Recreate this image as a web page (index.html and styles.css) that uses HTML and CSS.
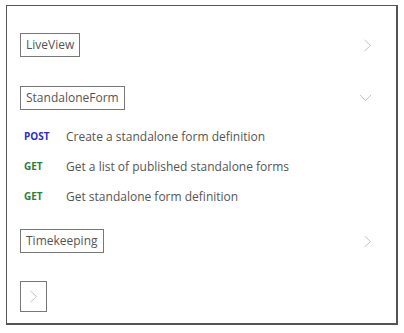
FILE: index.html
```html
<!DOCTYPE html>
<html lang="en">
<head>
    <meta charset="UTF-8">
    <title>API Groups</title>
    <link rel="stylesheet" href="styles.css">
</head>
<body>
    <div class="frame">
        <div class="group">
            <div class="group-header">
                <span class="tag">LiveView</span>
                <svg class="chevron" width="9" height="13" viewBox="0 0 9 13"><polyline points="1.5,1 7.5,6.5 1.5,12" /></svg>
            </div>
        </div>

        <div class="group open">
            <div class="group-header">
                <span class="tag">StandaloneForm</span>
                <svg class="chevron" width="13" height="8" viewBox="0 0 13 8"><polyline points="1,1 6.5,6.5 12,1" /></svg>
            </div>
            <ul class="ops">
                <li><span class="method post">POST</span><span class="desc">Create a standalone form definition</span></li>
                <li><span class="method get">GET</span><span class="desc">Get a list of published standalone forms</span></li>
                <li><span class="method get">GET</span><span class="desc">Get standalone form definition</span></li>
            </ul>
        </div>

        <div class="group">
            <div class="group-header">
                <span class="tag">Timekeeping</span>
                <svg class="chevron" width="9" height="13" viewBox="0 0 9 13"><polyline points="1.5,1 7.5,6.5 1.5,12" /></svg>
            </div>
        </div>

        <div class="more">
            <svg class="chevron" width="9" height="13" viewBox="0 0 9 13"><polyline points="1.5,1 7.5,6.5 1.5,12" /></svg>
        </div>
    </div>
</body>
</html>
```

FILE: styles.css
```css
/* Page */
body {
    margin: 0;
    padding: 5px 0 0 6px;
    background: #ffffff;
    font-family: "Open Sans", Arial, sans-serif;
    color: #555555;
}

.frame {
    width: 392px;
    height: 320px;
    box-sizing: border-box;
    border: 1px solid #555555;
    border-right-width: 2px;
    border-bottom-width: 2px;
    padding: 27px 0 0 13px;
    display: flex;
    flex-direction: column;
}

/* Groups */
.group {
    margin-bottom: 29px;
}

.group.open {
    margin-bottom: 18px;
}

.group-header {
    display: flex;
    align-items: center;
    justify-content: space-between;
    padding-right: 24px;
}

.tag {
    display: inline-block;
    height: 22px;
    line-height: 22px;
    padding: 0 5px;
    border: 1px solid #777777;
    font-size: 12px;
    color: #555555;
}

.chevron polyline {
    fill: none;
    stroke: #c4c4c4;
    stroke-width: 1;
}

/* Operations */
.ops {
    list-style: none;
    margin: 11px 0 0 0;
    padding: 0;
}

.ops li {
    display: flex;
    align-items: center;
    height: 30px;
}

.method {
    width: 42px;
    padding-left: 4px;
    font-size: 10px;
    font-weight: 700;
}

.method.post {
    color: #2a2ad0;
}

.method.get {
    color: #2e7d32;
}

.desc {
    font-size: 12px;
    color: #555555;
}

/* Pager */
.more {
    width: 27px;
    height: 31px;
    margin-top: -1px;
    box-sizing: border-box;
    border: 1px solid #777777;
    display: flex;
    align-items: center;
    justify-content: center;
}
```
